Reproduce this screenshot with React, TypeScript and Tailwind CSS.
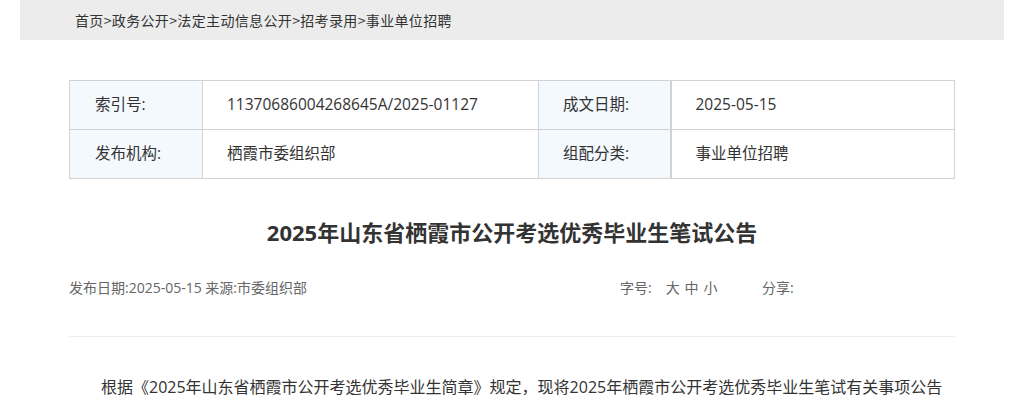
const font = "font-['Open_Sans','Noto_Sans_CJK_SC',sans-serif]";

const rows = [
  ["索引号:", "11370686004268645A/2025-01127", "成文日期:", "2025-05-15"],
  ["发布机构:", "栖霞市委组织部", "组配分类:", "事业单位招聘"],
];

export default function App() {
  return (
    <div className={`${font} mx-auto w-[984px] bg-white text-[#333]`}>
      <div className="flex h-10 items-center bg-[#ececec] pl-[55px] font-['Noto_Sans_CJK_SC',sans-serif] text-[14px] tracking-[0.35px]">
        首页&gt;政务公开&gt;法定主动信息公开&gt;招考录用&gt;事业单位招聘
      </div>

      <div className="mx-[49px]">
        <table className="mt-10 w-full border-collapse text-[15.5px]">
          <tbody>
            {rows.map((r) => (
              <tr key={r[0]} className="h-[49px]">
                <td className="w-[133px] border border-[#d2d2d2] bg-[#f3f9fd] pl-[25px]">{r[0]}</td>
                <td className="w-[336px] border border-[#d2d2d2] pl-[24px]">{r[1]}</td>
                <td className="w-[132px] border border-r-2 border-[#d2d2d2] bg-[#f3f9fd] pl-[24px]">{r[2]}</td>
                <td className="border border-[#d2d2d2] pl-[24px]">{r[3]}</td>
              </tr>
            ))}
          </tbody>
        </table>

        <h1 className="mt-[38px] text-center text-[22px] font-bold leading-[30px] text-[#333]">
          2025年山东省栖霞市公开考选优秀毕业生笔试公告
        </h1>

        <div className="mt-[31px] flex items-center text-[14px] leading-5 text-[#666]">
          <span>发布日期:2025-05-15 来源:市委组织部</span>
          <span className="ml-[313px]">字号:</span>
          <span className="ml-[14px] tracking-[0.6px]">大 中 小</span>
          <span className="ml-[44px]">分享:</span>
        </div>

        <div className="mt-[38px] border-t border-[#eeeeee]" />

        <p className="mt-[38px] indent-8 text-[16px] leading-6 text-[#333]">
          根据《2025年山东省栖霞市公开考选优秀毕业生简章》规定，现将2025年栖霞市公开考选优秀毕业生笔试有关事项公告如下：
        </p>
      </div>
    </div>
  );
}
